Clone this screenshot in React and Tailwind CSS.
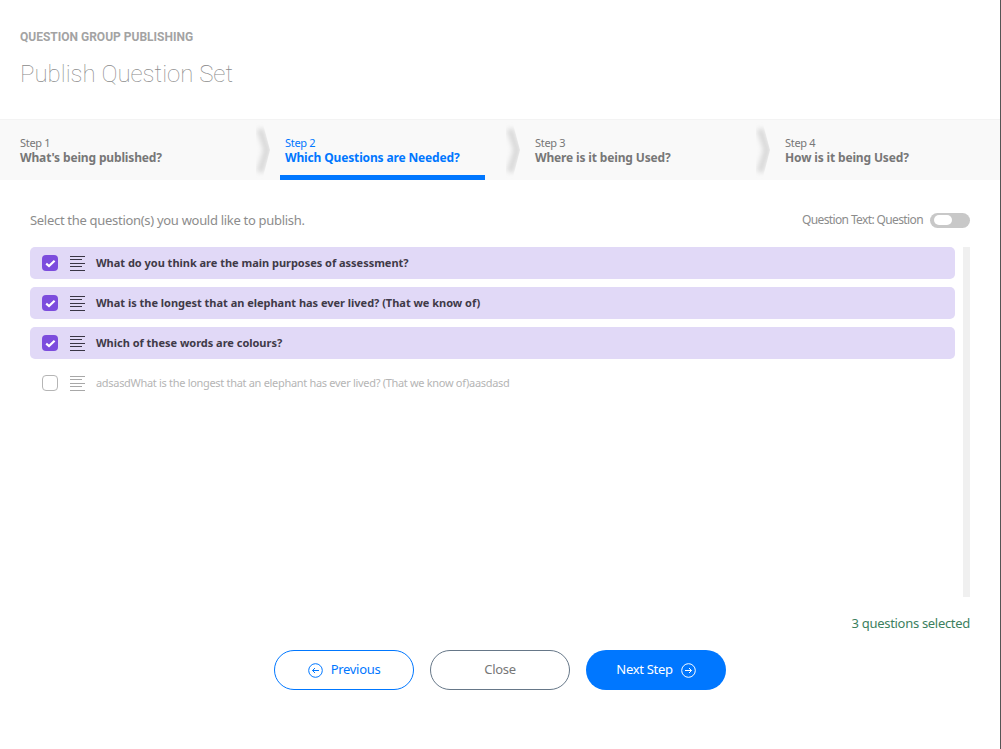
import { useState } from 'react';

const steps = [
  { label: 'Step 1', title: "What's being published?" },
  { label: 'Step 2', title: 'Which Questions are Needed?', active: true },
  { label: 'Step 3', title: 'Where is it being Used?' },
  { label: 'Step 4', title: 'How is it being Used?' },
];

const questions = [
  { text: 'What do you think are the main purposes of assessment?', checked: true },
  { text: 'What is the longest that an elephant has ever lived? (That we know of)', checked: true },
  { text: 'Which of these words are colours?', checked: true },
  { text: 'adsasdWhat is the longest that an elephant has ever lived? (That we know of)aasdasd', checked: false },
];

function Chevron() {
  return (
    <svg className="absolute left-[5px] top-0 h-[61px] w-[32px]" viewBox="0 0 32 61" fill="none">
      <defs>
        <filter id="chevron-blur" x="-50%" y="-20%" width="200%" height="140%">
          <feGaussianBlur stdDeviation="2.8" />
        </filter>
        <clipPath id="chevron-clip">
          <path d="M0 0 H7 L15 30 L7 61 H0 Z" />
        </clipPath>
      </defs>
      <g clipPath="url(#chevron-clip)">
        <path d="M5 9 L12 30 L5 52" stroke="#d8d8d8" strokeWidth="7" filter="url(#chevron-blur)" />
      </g>
    </svg>
  );
}

function LinesIcon({ muted }) {
  const color = muted ? 'bg-[#a8a8a8]' : 'bg-[#3a3645]';
  return (
    <div className="flex h-[15px] w-[15px] flex-col justify-between">
      <div className={`h-px w-[15px] ${color}`} />
      <div className={`h-px w-[12px] ${color}`} />
      <div className={`h-px w-[15px] ${color}`} />
      <div className={`h-px w-[12px] ${color}`} />
      <div className={`h-px w-[15px] ${color}`} />
    </div>
  );
}

function QuestionRow({ text, checked }) {
  return (
    <div className={`flex h-8 items-center rounded-[5px] pl-3 ${checked ? 'bg-[#e1d9f7]' : ''}`}>
      {checked ? (
        <div className="flex h-4 w-4 items-center justify-center rounded-[4px] bg-[#7c4ddd]">
          <svg width="11" height="9" viewBox="0 0 11 9" fill="none">
            <path d="M1.2 4.6 L4 7 L9.6 1.8" stroke="#fff" strokeWidth="2.2" />
          </svg>
        </div>
      ) : (
        <div className="h-4 w-4 rounded-[4px] border border-[#b5b5b5] bg-white" />
      )}
      <div className="ml-3">
        <LinesIcon muted={!checked} />
      </div>
      <span className={`ml-[11px] text-[11px] ${checked ? 'font-bold tracking-[-0.02px] text-[#3f3a48]' : 'tracking-[-0.31px] text-[#b5b5b5]'}`}>{text}</span>
    </div>
  );
}

export default function App() {
  const [questionText, setQuestionText] = useState(false);
  return (
    <div className="h-[749px] w-full overflow-hidden border-r border-[#555] bg-white font-['Noto_Sans',sans-serif]">
      {/* Header */}
      <header className="h-[119px] px-5 pt-[29px]">
        <div className="font-['Roboto',sans-serif] text-[12px] leading-[16px] font-bold text-[#a3a3a3]">QUESTION GROUP PUBLISHING</div>
        <h1 className="mt-[13px] font-['Roboto',sans-serif] text-[24px] leading-[32px] font-thin text-[#8a8a8a]">Publish Question Set</h1>
      </header>

      {/* Steps */}
      <nav className="flex h-[61px] border-t border-[#f3f3f3] bg-[#f9f9f9]">
        {steps.map((step, i) => (
          <div key={step.label} className={`relative h-full w-[250px] pt-[16px] ${i === 0 ? 'pl-5' : 'pl-[35px]'}`}>
            {i > 0 && <Chevron />}
            <div className={`text-[11px] leading-[14px] tracking-[-0.3px] ${step.active ? 'text-[#0077ff]' : 'text-[#777]'}`}>{step.label}</div>
            <div className={`text-[12px] leading-[15px] font-bold tracking-[-0.15px] ${step.active ? 'text-[#0077ff]' : 'text-[#777]'}`}>{step.title}</div>
            {step.active && <div className="absolute bottom-0 left-[30px] h-[5px] w-[205px] bg-[#0077ff]" />}
          </div>
        ))}
      </nav>

      <main className="px-[30px]">
        <div className="flex h-[67px] items-center justify-between pt-[13px]">
          <span className="pt-[2px] text-[13px] tracking-[-0.3px] text-[#8c8c8c]">Select the question(s) you would like to publish.</span>
          <div className="flex items-center">
            <span className="text-[12px] tracking-[-0.62px] text-[#8c8c8c]">Question Text: Question</span>
            <button
              type="button"
              onClick={() => setQuestionText(!questionText)}
              className={`ml-[7px] flex h-[15px] w-10 items-center rounded-full bg-[#c8c8c8] px-1 ${questionText ? 'justify-end' : ''}`}
            >
              <span className="h-[10px] w-[18px] rounded-full bg-white" />
            </button>
          </div>
        </div>

        <div className="flex h-[350px] justify-between">
          <div className="flex w-[925px] flex-col gap-2">
            {questions.map((q) => (
              <QuestionRow key={q.text} text={q.text} checked={q.checked} />
            ))}
          </div>
          <div className="h-full w-[7px] bg-[#f0f0f0]" />
        </div>

        <div className="mt-[17px] text-right text-[13px] leading-[19px] tracking-[-0.3px] text-[#3c7f5e]">3 questions selected</div>

        <div className="mt-[17px] flex justify-center gap-4">
          <button type="button" className="flex h-10 w-[140px] items-center justify-center gap-2 rounded-full border border-[#0077ff] text-[13px] tracking-[-0.3px] text-[#0077ff]">
            <svg width="15" height="15" viewBox="0 0 15 15" fill="none" stroke="currentColor">
              <circle cx="7.5" cy="7.5" r="6.8" />
              <path d="M11 7.5 H4.5 M7 5 L4.5 7.5 L7 10" />
            </svg>
            Previous
          </button>
          <button type="button" className="flex h-10 w-[140px] items-center justify-center rounded-full border border-[#667788] text-[13px] tracking-[-0.3px] text-[#777]">
            Close
          </button>
          <button type="button" className="flex h-10 w-[140px] items-center justify-center gap-2 rounded-full bg-[#0077ff] text-[13px] tracking-[-0.3px] text-white">
            Next Step
            <svg width="15" height="15" viewBox="0 0 15 15" fill="none" stroke="currentColor">
              <circle cx="7.5" cy="7.5" r="6.8" />
              <path d="M4 7.5 H10.5 M8 5 L10.5 7.5 L8 10" />
            </svg>
          </button>
        </div>
      </main>
    </div>
  );
}
